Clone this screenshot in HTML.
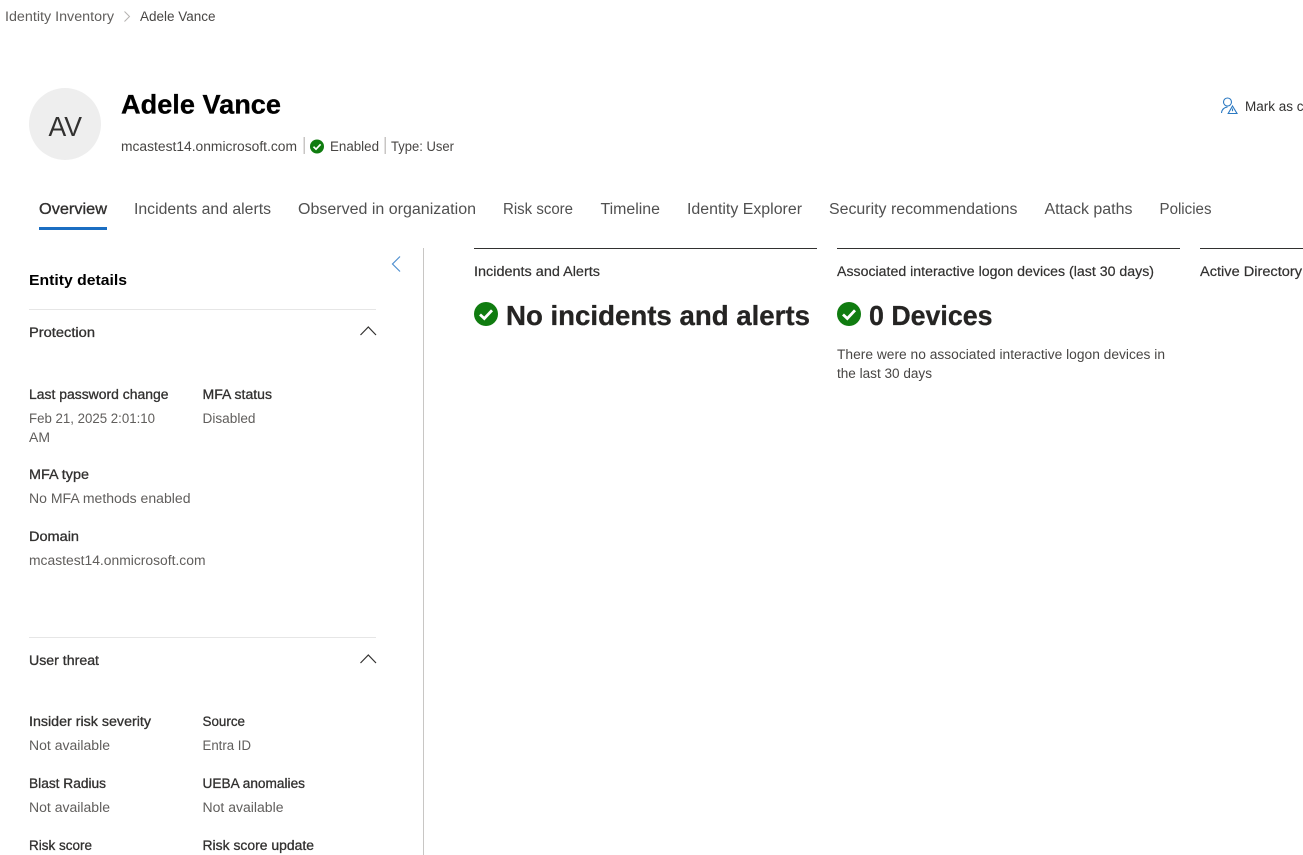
<!DOCTYPE html>
<html lang="en">
<head>
<meta charset="utf-8">
<title>Adele Vance</title>
<style>
html,body{margin:0;padding:0;background:#fff;width:1303px;height:855px;overflow:hidden}
svg{display:block}
text{font-family:"Liberation Sans",Arial,sans-serif;font-size:13.5px;fill:#605e5c;white-space:pre}
.l{fill:#323130;stroke:#323130;stroke-width:.3px}
.t{font-size:15.5px;fill:#505050}
.d{font-size:13.5px;fill:#605e5c}
.b{font-weight:700}
</style>
</head>
<body>
<svg width="1303" height="855" viewBox="0 0 1303 855" xmlns="http://www.w3.org/2000/svg">
<!-- breadcrumb -->
<text x="5" y="21" textLength="109" lengthAdjust="spacingAndGlyphs" style="fill:#605e5c">Identity Inventory</text>
<path d="M124.500 11.500L129.500 16.500L124.500 21.500" fill="none" stroke="#b5b3b1" stroke-width="1"/>
<text x="140" y="21" textLength="75.500" lengthAdjust="spacingAndGlyphs" style="fill:#484644">Adele Vance</text>

<!-- header -->
<circle cx="65" cy="124" r="36" fill="#eeeeee"/>
<text x="48.500" y="136" textLength="33.500" lengthAdjust="spacingAndGlyphs" style="font-size:28px;fill:#323130">AV</text>
<text x="121" y="113.500" textLength="160" lengthAdjust="spacingAndGlyphs" class="b" style="font-size:27px;fill:#000;stroke:#000;stroke-width:.3px">Adele Vance</text>
<text x="121" y="151" textLength="176" lengthAdjust="spacingAndGlyphs" style="fill:#484644">mcastest14.onmicrosoft.com</text>
<rect x="303.500" y="137" width="1.500" height="17" fill="#c8c6c4"/>
<circle cx="317" cy="146.500" r="7" fill="#107c10"/>
<path d="M313.500 146.700L316 149.200L320.600 144.300" fill="none" stroke="#fff" stroke-width="1.700"/>
<text x="330" y="151" textLength="49" lengthAdjust="spacingAndGlyphs" style="fill:#484644">Enabled</text>
<rect x="384.500" y="137" width="1.500" height="17" fill="#c8c6c4"/>
<text x="391" y="151" textLength="63" lengthAdjust="spacingAndGlyphs" style="fill:#484644">Type: User</text>

<!-- mark as compromised -->
<g fill="none" stroke="#2b79c2" stroke-width="1.100">
<circle cx="1227.500" cy="102" r="4"/>
<path d="M1221.500 113C1221.800 109.500 1224 107.500 1227.500 107"/>
<path d="M1232.500 106L1237 113.500H1228.200Z"/>
<path d="M1232.500 108.500V111.200"/>
</g>
<text x="1245" y="111" style="fill:#323130">Mark as compromised</text>

<!-- tabs -->
<text x="39" y="214" textLength="68" lengthAdjust="spacingAndGlyphs" class="t" style="fill:#323130;stroke:#323130;stroke-width:.35px">Overview</text>
<text x="134" y="214" textLength="137" lengthAdjust="spacingAndGlyphs" class="t">Incidents and alerts</text>
<text x="298" y="214" textLength="178" lengthAdjust="spacingAndGlyphs" class="t">Observed in organization</text>
<text x="503" y="214" textLength="70" lengthAdjust="spacingAndGlyphs" class="t">Risk score</text>
<text x="600.500" y="214" textLength="59.500" lengthAdjust="spacingAndGlyphs" class="t">Timeline</text>
<text x="687" y="214" textLength="115" lengthAdjust="spacingAndGlyphs" class="t">Identity Explorer</text>
<text x="829" y="214" textLength="188.500" lengthAdjust="spacingAndGlyphs" class="t">Security recommendations</text>
<text x="1044.500" y="214" textLength="88" lengthAdjust="spacingAndGlyphs" class="t">Attack paths</text>
<text x="1159.500" y="214" textLength="52" lengthAdjust="spacingAndGlyphs" class="t">Policies</text>
<rect x="39" y="227" width="68" height="3" fill="#1b6ec2"/>

<!-- left pane -->
<path d="M400 256.500L392.500 264L400 271.500" fill="none" stroke="#4f8fd0" stroke-width="1.200"/>
<rect x="423" y="248" width="1" height="607" fill="#c8c6c4"/>
<text x="29" y="285" textLength="98" lengthAdjust="spacingAndGlyphs" class="b" style="font-size:14.500px;fill:#000">Entity details</text>
<rect x="29" y="309" width="347" height="1" fill="#e6e6e6"/>
<text x="29" y="337" textLength="66" lengthAdjust="spacingAndGlyphs" class="l">Protection</text>
<path d="M360.500 335L368.300 327L376 335" fill="none" stroke="#323130" stroke-width="1.200"/>

<text x="29" y="399" textLength="139.500" lengthAdjust="spacingAndGlyphs" class="l">Last password change</text>
<text x="202.500" y="399" textLength="69.500" lengthAdjust="spacingAndGlyphs" class="l">MFA status</text>
<text x="29" y="423" textLength="126" lengthAdjust="spacingAndGlyphs" class="d">Feb 21, 2025 2:01:10</text>
<text x="202.500" y="423" textLength="53" lengthAdjust="spacingAndGlyphs" class="d">Disabled</text>
<text x="29" y="442" textLength="21" lengthAdjust="spacingAndGlyphs" class="d">AM</text>
<text x="29" y="479" textLength="60" lengthAdjust="spacingAndGlyphs" class="l">MFA type</text>
<text x="29" y="503" textLength="161.500" lengthAdjust="spacingAndGlyphs" class="d">No MFA methods enabled</text>
<text x="29" y="541" textLength="50" lengthAdjust="spacingAndGlyphs" class="l">Domain</text>
<text x="29" y="565" textLength="176.500" lengthAdjust="spacingAndGlyphs" class="d">mcastest14.onmicrosoft.com</text>

<rect x="29" y="637" width="347" height="1" fill="#e6e6e6"/>
<text x="29" y="665" textLength="70" lengthAdjust="spacingAndGlyphs" class="l">User threat</text>
<path d="M360.500 663L368.300 655L376 663" fill="none" stroke="#323130" stroke-width="1.200"/>

<text x="29" y="726" textLength="122" lengthAdjust="spacingAndGlyphs" class="l">Insider risk severity</text>
<text x="202.500" y="726" textLength="42.500" lengthAdjust="spacingAndGlyphs" class="l">Source</text>
<text x="29" y="750" textLength="81" lengthAdjust="spacingAndGlyphs" class="d">Not available</text>
<text x="202.500" y="750" textLength="48.500" lengthAdjust="spacingAndGlyphs" class="d">Entra ID</text>
<text x="29" y="788" textLength="77" lengthAdjust="spacingAndGlyphs" class="l">Blast Radius</text>
<text x="202.500" y="788" textLength="102.500" lengthAdjust="spacingAndGlyphs" class="l">UEBA anomalies</text>
<text x="29" y="812" textLength="81" lengthAdjust="spacingAndGlyphs" class="d">Not available</text>
<text x="202.500" y="812" textLength="81" lengthAdjust="spacingAndGlyphs" class="d">Not available</text>
<text x="29" y="850" textLength="63" lengthAdjust="spacingAndGlyphs" class="l">Risk score</text>
<text x="202.500" y="850" textLength="111.500" lengthAdjust="spacingAndGlyphs" class="l">Risk score update</text>

<!-- cards -->
<rect x="474" y="248" width="343" height="1" fill="#323130"/>
<rect x="837" y="248" width="343" height="1" fill="#323130"/>
<rect x="1200" y="248" width="103" height="1" fill="#323130"/>
<text x="474" y="276" textLength="126" lengthAdjust="spacingAndGlyphs" class="l" style="stroke-width:.2px">Incidents and Alerts</text>
<text x="837" y="276" textLength="317" lengthAdjust="spacingAndGlyphs" class="l" style="stroke-width:.2px">Associated interactive logon devices (last 30 days)</text>
<text x="1200" y="276" textLength="102" lengthAdjust="spacingAndGlyphs" class="l" style="stroke-width:.2px">Active Directory</text>

<circle cx="486" cy="314" r="12" fill="#107c10"/>
<path d="M480 314.500L484.300 318.500L492 310.300" fill="none" stroke="#fff" stroke-width="2.800"/>
<text x="506" y="325" textLength="304" lengthAdjust="spacingAndGlyphs" class="b" style="font-size:28px;fill:#252423;stroke:#252423;stroke-width:.3px">No incidents and alerts</text>

<circle cx="849" cy="314" r="12" fill="#107c10"/>
<path d="M843 314.500L847.300 318.500L855 310.300" fill="none" stroke="#fff" stroke-width="2.800"/>
<text x="869" y="325" textLength="123.500" lengthAdjust="spacingAndGlyphs" class="b" style="font-size:28px;fill:#252423;stroke:#252423;stroke-width:.3px">0 Devices</text>

<text x="837" y="359" textLength="328" lengthAdjust="spacingAndGlyphs" style="fill:#484644">There were no associated interactive logon devices in</text>
<text x="837" y="378" textLength="95" lengthAdjust="spacingAndGlyphs" style="fill:#484644">the last 30 days</text>
</svg>
</body>
</html>
